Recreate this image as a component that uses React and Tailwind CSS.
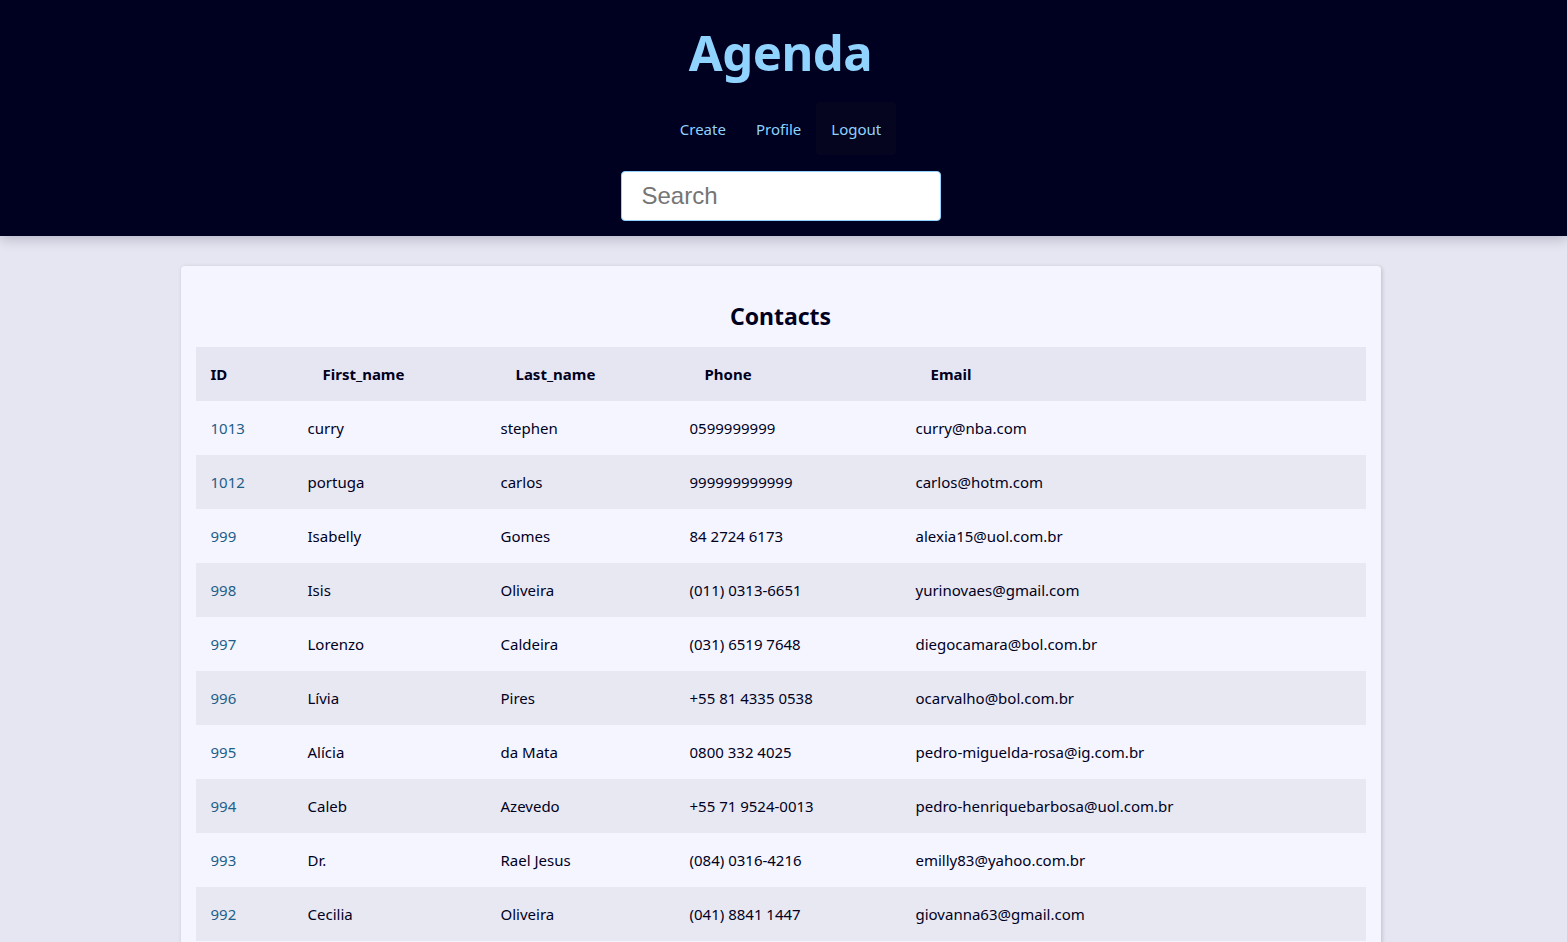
const CONTACTS = [
  ["1013", "curry", "stephen", "0599999999", "curry@nba.com"],
  ["1012", "portuga", "carlos", "999999999999", "carlos@hotm.com"],
  ["999", "Isabelly", "Gomes", "84 2724 6173", "alexia15@uol.com.br"],
  ["998", "Isis", "Oliveira", "(011) 0313-6651", "yurinovaes@gmail.com"],
  ["997", "Lorenzo", "Caldeira", "(031) 6519 7648", "diegocamara@bol.com.br"],
  ["996", "Lívia", "Pires", "+55 81 4335 0538", "ocarvalho@bol.com.br"],
  ["995", "Alícia", "da Mata", "0800 332 4025", "pedro-miguelda-rosa@ig.com.br"],
  ["994", "Caleb", "Azevedo", "+55 71 9524-0013", "pedro-henriquebarbosa@uol.com.br"],
  ["993", "Dr.", "Rael Jesus", "(084) 0316-4216", "emilly83@yahoo.com.br"],
  ["992", "Cecilia", "Oliveira", "(041) 8841 1447", "giovanna63@gmail.com"],
];

const HEADERS = ["ID", "First_name", "Last_name", "Phone", "Email"];

export default function App() {
  return (
    <div className="min-h-screen bg-[#e6e6f2] text-[#00001e] font-['Noto_Sans',sans-serif]">
      <header className="relative z-10 bg-[#000020] flex flex-col items-center pr-[6px] pt-[20px] pb-[15px] shadow-[0_3px_12px_rgba(0,0,40,0.22)]">
        <h1 className="text-[49px] leading-[64px] font-bold text-[#8fd3fe] tracking-[-0.5px]">Agenda</h1>
        <nav className="mt-[18px] flex text-[15px] text-[#8fd3fe]">
          <a className="px-[15px] h-[53px] flex items-center pt-[2px]">Create</a>
          <a className="px-[15px] h-[53px] flex items-center pt-[2px]">Profile</a>
          <a className="px-[15px] h-[53px] flex items-center pt-[2px] bg-[#05051f] rounded">Logout</a>
        </nav>
        <input
          type="text"
          placeholder="Search"
          className="mt-[16px] w-[320px] h-[50px] bg-white border border-[#8fd3fe] rounded-[4px] pl-[20px] text-[24px] font-['Liberation_Sans',Arial,sans-serif] placeholder-[#757575] outline-none"
        />
      </header>

      <main className="pt-[30px] pr-[6px] flex justify-center">
        <div className="w-[1200px] bg-[#f4f5fe] rounded-[4px] shadow-[1px_1px_4px_rgba(0,0,40,0.18)] px-[15px] pt-[15px] pb-[15px]">
          <h2 className="text-center text-[23px] leading-[32px] font-bold mt-[19px] mb-[15px]">Contacts</h2>
          <table className="w-full table-fixed border-collapse text-[15px]">
            <colgroup>
              <col className="w-[97px]" />
              <col className="w-[193px]" />
              <col className="w-[189px]" />
              <col className="w-[226px]" />
              <col />
            </colgroup>
            <thead>
              <tr className="bg-[#e6e6f3] h-[54px]">
                {HEADERS.map((h, i) => (
                  <th key={h} className={`text-left font-bold pt-[1px] ${i === 0 ? "pl-[15px]" : "pl-[30px]"}`}>{h}</th>
                ))}
              </tr>
            </thead>
            <tbody>
              {CONTACTS.map((c, r) => (
                <tr key={c[0]} className={`h-[54px] ${r % 2 === 1 ? "bg-[#e8e8f2]" : "bg-[#f4f5fe]"}`}>
                  {c.map((v, i) => (
                    <td key={i} className={`pl-[15px] pt-[1px] ${i === 0 ? "text-[#1e5f8a]" : ""}`}>{v}</td>
                  ))}
                </tr>
              ))}
            </tbody>
          </table>
        </div>
      </main>
    </div>
  );
}
